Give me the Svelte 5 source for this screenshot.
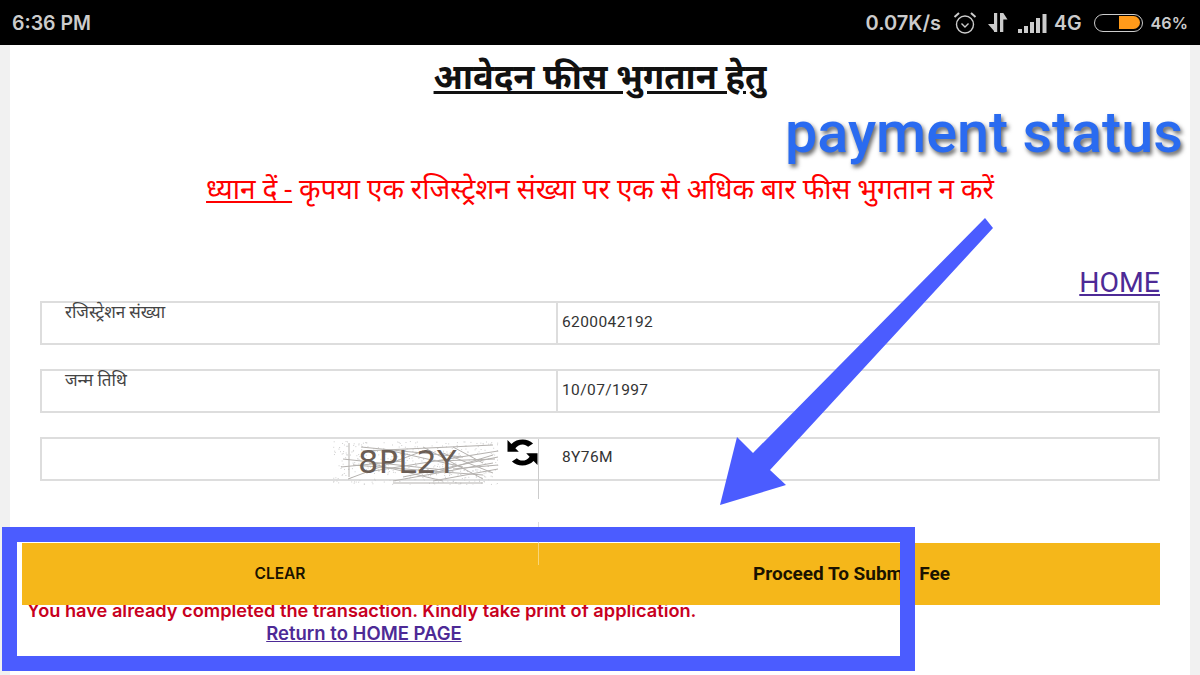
<script>
  const rows = [
    { label: 'रजिस्ट्रेशन संख्या', value: '6200042192' },
    { label: 'जन्म तिथि', value: '10/07/1997' }
  ];

  // scratchy lines over the captcha
  const noise = [
    [30, 10, 160, 4], [40, 30, 165, 10], [20, 24, 150, 34], [60, 40, 160, 22],
    [10, 18, 120, 30], [90, 6, 150, 38], [70, 36, 165, 16], [15, 38, 90, 10],
    [110, 12, 160, 32], [50, 8, 130, 26], [16, 2, 16, 36], [100, 40, 165, 28],
    [120, 6, 150, 22], [36, 22, 110, 40], [60, 42, 150, 42], [28, 6, 130, 16],
    [8, 26, 70, 20], [95, 34, 160, 14], [120, 28, 165, 24], [105, 20, 162, 18]
  ];

  // speckle behind the captcha, seeded so it stays the same
  let seed = 7;
  function rand() {
    seed = (seed * 16807) % 2147483647;
    return seed / 2147483647;
  }
  const dots = Array.from({ length: 420 }, () => [rand() * 165, rand() * 44]);
</script>

<div class="status">
  <span class="time">6:36 PM</span>
  <div class="indicators">
    <span class="speed">0.07K/s</span>
    <svg class="alarm" width="24" height="24" viewBox="0 0 24 24" fill="none" stroke="#ccc">
      <circle cx="12" cy="13.5" r="8.5" stroke-width="1.4" />
      <path d="M8.500 12.500l3.500 3.500 3.500-3.500" stroke-width="1.4" />
      <path d="M1.500 6 6 2M22.500 6 18 2" stroke-width="2" />
    </svg>
    <svg class="data" width="21" height="20" viewBox="0 0 21 20" fill="#ccc">
      <path d="M7 0h3.200v19H7zM1 11h6v7z" />
      <path d="M13 0h3.300v19H13zM16.300 0l4.200 6.500h-4.200z" />
    </svg>
    <svg class="signal" width="29" height="20" viewBox="0 0 29 20" fill="#ccc">
      <rect x="0" y="16" width="4" height="4" />
      <rect x="6" y="13" width="4" height="7" />
      <rect x="12" y="9" width="4" height="11" />
      <rect x="18" y="5" width="4" height="15" />
      <rect x="24.500" y="1" width="4" height="19" />
    </svg>
    <span class="net">4G</span>
    <span class="battery"><span class="charge"></span></span>
    <span class="pct">46%</span>
  </div>
</div>

<main class="page">
  <h1>आवेदन फीस भुगतान हेतु</h1>
  <p class="warning"><u>ध्यान दें -</u> कृपया एक रजिस्ट्रेशन संख्या पर एक से अधिक बार फीस भुगतान न करें</p>
  <div class="home"><a href="#home">HOME</a></div>

  <div class="form">
    {#each rows as row}
      <div class="row">
        <div class="label">{row.label}</div>
        <div class="value">{row.value}</div>
      </div>
    {/each}

    <div class="row captcha-row">
      <div class="captcha-cell">
        <svg class="captcha" width="166" height="44" viewBox="0 0 166 44">
          {#each dots as d}
            <rect x={d[0]} y={d[1]} width="1" height="1" fill="#cfcfcf" />
          {/each}
          {#each noise as n}
            <line x1={n[0]} y1={n[1]} x2={n[2]} y2={n[3]} stroke="#b5b2af" stroke-width="1" />
          {/each}
          <text x="25" y="32" class="captcha-text">8PL2Y</text>
        </svg>
        <svg class="refresh" width="31" height="27" viewBox="0 0 31.500 26.500" fill="#000">
          <path d="M0.500 0.500V12.500H12L8.500 9C10.500 6.500 13 5 16 5C18 5 20 6 21.500 7.500L26.500 4C23.500 1.500 20 0 16 0C11.500 0 7.500 1.500 4.500 4.500Z" />
          <path transform="rotate(180 15.750 13.250)" d="M0.500 0.500V12.500H12L8.500 9C10.500 6.500 13 5 16 5C18 5 20 6 21.500 7.500L26.500 4C23.500 1.500 20 0 16 0C11.500 0 7.500 1.500 4.500 4.500Z" />
        </svg>
      </div>
      <div class="value">8Y76M</div>
    </div>
  </div>

  <div class="buttons">
    <div class="btn clear">CLEAR</div>
    <div class="btn proceed">Proceed To Submit Fee</div>
  </div>

  <div class="message">
    <p>You have already completed the transaction. Kindly take print of application.</p>
    <a href="#home">Return to HOME PAGE</a>
  </div>
</main>

<!-- annotations drawn on top of the screenshot -->
<div class="mark-box"></div>
<div class="mark-label">payment status</div>
<svg class="mark-arrow" width="1200" height="675" viewBox="0 0 1200 675">
  <polygon fill="#4b5cff" points="985,218 993,228 770,470 786,485 720,505 737,437 753,453" />
</svg>

<style>
  :global(body) {
    background: #f1f1f1;
    font-family: Roboto, "Noto Sans", sans-serif;
  }

  .status {
    height: 45px;
    background: #000;
    color: #ccc;
    display: flex;
    align-items: center;
    justify-content: space-between;
    padding: 0 12px;
    font-family: Inter, Roboto, sans-serif;
    font-size: 19.500px;
    font-weight: 600;
  }
  .indicators {
    display: flex;
    align-items: center;
  }
  .speed { font-size: 20px; }
  .alarm { margin-left: 12px; }
  .data { margin-left: 10px; }
  .signal { margin-left: 10px; }
  .net { margin-left: 7px; }
  .pct { font-size: 16.200px; }
  .battery {
    width: 49px;
    height: 18px;
    margin-left: 12px;
    margin-right: 8px;
    border: 1.500px solid #ccc;
    border-radius: 9px;
    box-sizing: border-box;
    display: flex;
    justify-content: flex-end;
    padding: 1.500px;
  }
  .charge {
    width: 21px;
    background: #ff9a1a;
    border-radius: 0 7px 7px 0;
  }

  .page {
    margin: 0 10px;
    height: 630px;
    box-sizing: border-box;
    background: #fff;
    padding: 10px 30px 0;
    overflow: hidden;
  }
  h1 {
    margin: 0;
    text-align: center;
    font-size: 34.500px;
    line-height: 44px;
    font-weight: 700;
    color: #111;
    text-decoration: underline;
  }
  .warning {
    margin: 69px 0 0;
    text-align: center;
    font-size: 28px;
    line-height: 44px;
    color: #f00;
  }
  .home {
    margin-top: 53px;
    text-align: right;
    font-size: 28.400px;
    line-height: 36px;
  }
  .home a,
  .message a {
    color: #4d2a96;
  }

  .form {
    display: flex;
    flex-direction: column;
    gap: 24px;
  }
  .row {
    height: 44px;
    box-sizing: border-box;
    border: 2px solid #ddd;
    display: grid;
    grid-template-columns: 514px 1fr;
  }
  .captcha-row {
    grid-template-columns: 497px 1fr;
  }
  .label {
    padding: 0 0 0 23px;
    font-size: 17px;
    line-height: 18px;
    color: #444;
  }
  .value {
    border-left: 2px solid #ddd;
    padding: 9px 0 0 4px;
    font-size: 15.500px;
    line-height: 20px;
    letter-spacing: 0.4px;
    color: #333;
  }
  .captcha-row .value {
    padding-top: 8px;
    padding-left: 23px;
    border-left: 0;
  }
  .captcha-cell {
    display: flex;
    justify-content: flex-end;
    align-items: flex-start;
    border-right: 1px solid #ccc;
    height: 60px;
  }
  .captcha {
    margin: 2px 8px 0 0;
    flex: none;
  }
  .captcha-text {
    font-family: "DejaVu Sans", sans-serif;
    font-size: 32px;
    letter-spacing: 0.3px;
    fill: #6a5d54;
  }
  .refresh {
    margin: 0;
    flex: none;
  }

  .buttons {
    margin: 62px 0 0 -18px;
    width: 1138px;
    height: 62px;
    background: #f5b71a;
    display: grid;
    grid-template-columns: 516px 1fr;
    position: relative;
    z-index: 1;
  }
  .buttons::before {
    content: '';
    position: absolute;
    left: 516px;
    top: -21px;
    width: 1px;
    height: 43px;
    background: linear-gradient(#ddd 0 21px, #f8d67a 21px);
  }
  .btn {
    display: flex;
    align-items: center;
    justify-content: center;
    color: #1a1200;
    font-weight: 600;
    padding-bottom: 2px;
  }
  .clear {
    font-family: Inter, Roboto, sans-serif;
    font-size: 15.500px;
  }
  .proceed {
    font-size: 19px;
    font-weight: 700;
    padding-left: 5px;
  }

  .message {
    width: 674px;
    margin: -6px 0 0 -13px;
    text-align: center;
    font-family: Inter, Roboto, sans-serif;
    font-size: 18.200px;
    font-weight: 600;
  }
  .message p {
    margin: 0;
    color: #c8001e;
    line-height: 23px;
    text-align: left;
  }
  .message a {
    display: inline-block;
    font-size: 18.500px;
    line-height: 23px;
  }

  .mark-box {
    position: absolute;
    left: 2px;
    top: 527px;
    width: 883px;
    height: 114px;
    border: 15px solid #4b5cff;
    z-index: 2;
  }
  .mark-label {
    position: absolute;
    left: 785px;
    top: 100px;
    white-space: nowrap;
    font-size: 57.500px;
    line-height: 66px;
    font-weight: 500;
    color: #2a6bf0;
    text-shadow: 2px 3px 4px #666;
    z-index: 2;
  }
  .mark-arrow {
    position: absolute;
    left: 0;
    top: 0;
    z-index: 2;
    pointer-events: none;
  }
</style>
